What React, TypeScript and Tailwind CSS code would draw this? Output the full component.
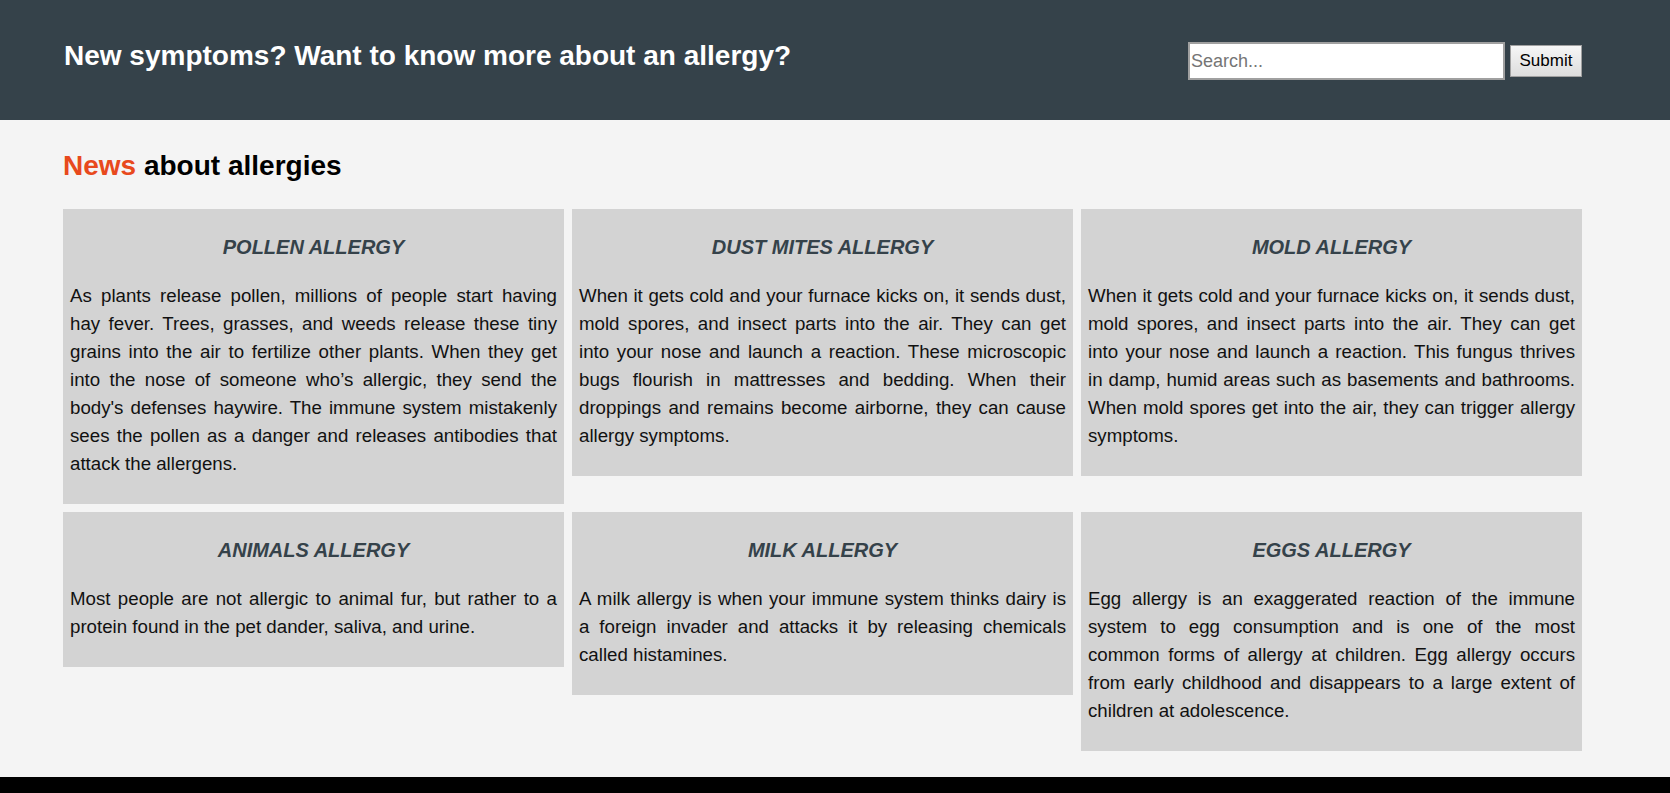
const news = [
  {
    title: "POLLEN ALLERGY",
    text: "As plants release pollen, millions of people start having hay fever. Trees, grasses, and weeds release these tiny grains into the air to fertilize other plants. When they get into the nose of someone who’s allergic, they send the body's defenses haywire. The immune system mistakenly sees the pollen as a danger and releases antibodies that attack the allergens.",
  },
  {
    title: "DUST MITES ALLERGY",
    text: "When it gets cold and your furnace kicks on, it sends dust, mold spores, and insect parts into the air. They can get into your nose and launch a reaction. These microscopic bugs flourish in mattresses and bedding. When their droppings and remains become airborne, they can cause allergy symptoms.",
  },
  {
    title: "MOLD ALLERGY",
    text: "When it gets cold and your furnace kicks on, it sends dust, mold spores, and insect parts into the air. They can get into your nose and launch a reaction. This fungus thrives in damp, humid areas such as basements and bathrooms. When mold spores get into the air, they can trigger allergy symptoms.",
  },
  {
    title: "ANIMALS ALLERGY",
    text: "Most people are not allergic to animal fur, but rather to a protein found in the pet dander, saliva, and urine.",
  },
  {
    title: "MILK ALLERGY",
    text: "A milk allergy is when your immune system thinks dairy is a foreign invader and attacks it by releasing chemicals called histamines.",
  },
  {
    title: "EGGS ALLERGY",
    text: "Egg allergy is an exaggerated reaction of the immune system to egg consumption and is one of the most common forms of allergy at children. Egg allergy occurs from early childhood and disappears to a large extent of children at adolescence.",
  },
];

const NewsCard = ({ title, text }: { title: string; text: string }) => {
  return (
    <div className="w-[501px] bg-[#d3d3d3] px-[7px] pt-[27px] pb-[26px]">
      <h3 className="text-center text-[20px] leading-[23px] font-bold italic text-[#35424a] mb-[23px]">{title}</h3>
      <p className="text-[18.7px] leading-[28px] text-justify text-[#111]">{text}</p>
    </div>
  );
};

const App = () => {
  return (
    <div className="min-h-[793px] bg-[#f4f4f4] font-['Liberation_Sans',Arial,sans-serif] flex flex-col">
      <header className="bg-[#35424a] h-[120px] pl-[64px] pr-[88px] flex items-start justify-between">
        <h1 className="text-white font-bold text-[28px] leading-[32px] mt-[40px]">New symptoms? Want to know more about an allergy?</h1>
        <form className="flex items-center gap-[5px] mt-[42px]" onSubmit={(e) => e.preventDefault()}>
          <input
            type="text"
            placeholder="Search..."
            className="w-[317px] h-[38px] bg-white border-2 border-[#a0a0a0] px-[1px] text-[18px] text-black placeholder:text-[#757575] outline-none"
          />
          <button type="submit" className="h-[32px] w-[72px] border border-[#a0a0a0] bg-gradient-to-b from-[#f6f6f6] to-[#dddddd] text-[17px] text-black">
            Submit
          </button>
        </form>
      </header>

      <main className="pl-[63px] pr-[88px] pt-[30px] pb-[26px]">
        <h2 className="font-bold text-[28px] leading-[32px] text-black mb-[27px]">
          <span className="text-[#e8491d]">News</span> about allergies
        </h2>
        <div className="flex flex-wrap items-start gap-x-[8px] gap-y-[8px]">
          {news.map((item) => (
            <NewsCard key={item.title} title={item.title} text={item.text} />
          ))}
        </div>
      </main>

      <footer className="bg-black flex-grow pr-[88px] pt-[11px] text-right text-[#b0b0b0] text-[16px]">
        Copyright © Allergy World
      </footer>
    </div>
  );
};

export default App;
